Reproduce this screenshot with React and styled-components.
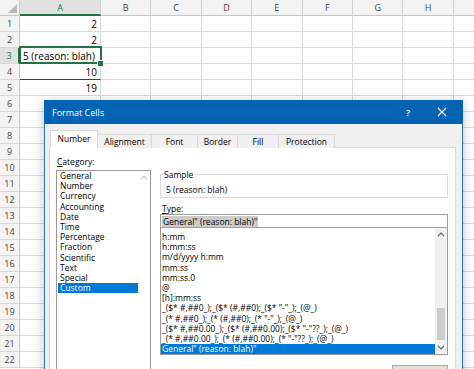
import React from "react";
import styled, { createGlobalStyle } from "styled-components";

const GlobalStyle = createGlobalStyle`
  html, body {
    margin: 0;
    padding: 0;
    background: #fff;
    overflow: hidden;
  }
  body {
    font-family: "Open Sans", "Noto Sans", sans-serif;
  }
`;

// the last column is only partly in view; its letter lies past the edge
const COLS = ["A", "B", "C", "D", "E", "F", "G", "H", ""];
const ROW_COUNT = 22;
const VALUES = { 1: "2", 2: "2", 3: "5 (reason: blah)", 4: "10", 5: "19" };

const CATEGORIES = [
  "General",
  "Number",
  "Currency",
  "Accounting",
  "Date",
  "Time",
  "Percentage",
  "Fraction",
  "Scientific",
  "Text",
  "Special",
  "Custom",
];

const FORMATS = [
  "h:mm",
  "h:mm:ss",
  "m/d/yyyy h:mm",
  "mm:ss",
  "mm:ss.0",
  "@",
  "[h]:mm:ss",
  '_($* #,##0_);_($* (#,##0);_($* "-"_);_(@_)',
  '_(* #,##0_);_(* (#,##0);_(* "-"_);_(@_)',
  '_($* #,##0.00_);_($* (#,##0.00);_($* "-"??_);_(@_)',
  '_(* #,##0.00_);_(* (#,##0.00);_(* "-"??_);_(@_)',
  'General" (reason: blah)"',
];

const TABS = [
  { label: "Number", width: 48 },
  { label: "Alignment", width: 55 },
  { label: "Font", width: 47 },
  { label: "Border", width: 41 },
  { label: "Fill", width: 42 },
  { label: "Protection", width: 57 },
];

export default function App() {
  return (
    <Page>
      <GlobalStyle />
      <Sheet>
        <Corner />
        {COLS.map((c, i) => (
          <ColHead key={i} $active={c === "A"}>
            {c}
          </ColHead>
        ))}
        {Array.from({ length: ROW_COUNT }, (_, i) => i + 1).map((r) => (
          <React.Fragment key={r}>
            <RowHead $active={r === 3}>{r}</RowHead>
            {COLS.map((c, i) => (
              <Cell
                key={i}
                $selected={c === "A" && r === 3}
                $under={c === "A" && r === 4}
                $left={r === 3}
              >
                {c === "A" ? VALUES[r] : null}
              </Cell>
            ))}
          </React.Fragment>
        ))}
      </Sheet>

      <Dialog>
        <TitleBar>
          <Title>Format Cells</Title>
          <TitleButtons>
            <TitleButton>?</TitleButton>
            <TitleButton>
              <svg width="10" height="10" viewBox="0 0 10 10">
                <path d="M1 1 L9 9 M9 1 L1 9" stroke="#fff" strokeWidth="1.1" />
              </svg>
            </TitleButton>
          </TitleButtons>
        </TitleBar>

        <Body>
          <TabRow>
            {TABS.map((t, i) => (
              <Tab key={t.label} $active={i === 0} $width={t.width}>
                {t.label}
              </Tab>
            ))}
          </TabRow>

          <Panel>
            <Column>
              <Label>
                <u>C</u>ategory:
              </Label>
              <CategoryList>
                <Items>
                  {CATEGORIES.map((c) => (
                    <Item key={c} $selected={c === "Custom"} $inset>
                      {c}
                    </Item>
                  ))}
                </Items>
                <Scrollbar $disabled>
                  <Arrow>
                    <Chevron up light />
                  </Arrow>
                  <Track />
                  <Arrow>
                    <Chevron light />
                  </Arrow>
                </Scrollbar>
              </CategoryList>
            </Column>

            <Column>
              <GroupBox>
                <Legend>Sample</Legend>
                5 (reason: blah)
              </GroupBox>
              <TypeLabel>
                <u>T</u>ype:
              </TypeLabel>
              <TypeInput>
                <Selection>General" (reason: blah)"</Selection>
              </TypeInput>
              <TypeList>
                <Items $top={4}>
                  {FORMATS.map((f, i) => (
                    <Item key={i} $selected={i === FORMATS.length - 1}>
                      {f}
                    </Item>
                  ))}
                </Items>
                <Scrollbar>
                  <Arrow>
                    <Chevron up />
                  </Arrow>
                  <Track>
                    <Thumb />
                  </Track>
                  <Arrow>
                    <Chevron />
                  </Arrow>
                </Scrollbar>
              </TypeList>
              <ButtonRow>
                <Button aria-label="Delete" />
              </ButtonRow>
            </Column>
          </Panel>
        </Body>
      </Dialog>
    </Page>
  );
}

function Chevron({ up, light }) {
  return (
    <svg width="8" height="5" viewBox="0 0 8 5">
      <polyline
        points={up ? "1,4.2 4,1.2 7,4.2" : "1,0.8 4,3.8 7,0.8"}
        fill="none"
        stroke={light ? "#c4c4c4" : "#606060"}
        strokeWidth="1.2"
      />
    </svg>
  );
}

const Page = styled.div`
  position: relative;
  width: 474px;
  height: 369px;
  overflow: hidden;
  background: #fff;
`;

/* ---------- spreadsheet ---------- */

const Sheet = styled.div`
  display: grid;
  grid-template-columns: 20px 81px repeat(8, 50.4px);
  grid-auto-rows: 16px;
  font-family: "Open Sans", sans-serif;
`;

const Corner = styled.div`
  position: relative;
  background: #f3f3f3;
  border-right: 1px solid #c6c6c6;
  border-bottom: 1px solid #c6c6c6;
  box-sizing: border-box;

  &::after {
    content: "";
    position: absolute;
    right: 2px;
    bottom: 2px;
    border-left: 9px solid transparent;
    border-bottom: 9px solid #b8b8b8;
  }
`;

const ColHead = styled.div`
  display: flex;
  align-items: center;
  justify-content: center;
  background: ${(p) => (p.$active ? "#e1e1e1" : "#f3f3f3")};
  border-right: 1px solid #d0d0d0;
  border-bottom: ${(p) => (p.$active ? "2px solid #217346" : "1px solid #c6c6c6")};
  box-sizing: border-box;
  font-size: 9px;
  color: ${(p) => (p.$active ? "#217346" : "#444")};
`;

const RowHead = styled.div`
  display: flex;
  align-items: center;
  justify-content: center;
  background: ${(p) => (p.$active ? "#e1e1e1" : "#f3f3f3")};
  border-right: ${(p) => (p.$active ? "2px solid #217346" : "1px solid #c6c6c6")};
  border-bottom: 1px solid #d8d8d8;
  box-sizing: border-box;
  font-size: 9px;
  color: ${(p) => (p.$active ? "#217346" : "#444")};
`;

const Cell = styled.div`
  position: relative;
  display: flex;
  align-items: center;
  justify-content: ${(p) => (p.$left ? "flex-start" : "flex-end")};
  padding: 0 3px;
  border-right: 1px solid #dadada;
  border-bottom: 1px solid ${(p) => (p.$under ? "#404040" : "#dadada")};
  box-sizing: border-box;
  font-size: 10px;
  color: #000;
  white-space: nowrap;

  ${(p) =>
    p.$selected &&
    `
    &::after {
      content: "";
      position: absolute;
      left: -1px;
      top: -2px;
      right: -2px;
      bottom: -1px;
      border: 2px solid #217346;
    }
    &::before {
      content: "";
      position: absolute;
      right: -4px;
      bottom: -4px;
      width: 5px;
      height: 5px;
      background: #217346;
      border: 1px solid #fff;
      z-index: 1;
    }
  `}
`;

/* ---------- dialog ---------- */

const Dialog = styled.div`
  position: absolute;
  left: 44px;
  top: 100px;
  width: 419px;
  height: 300px;
  box-sizing: border-box;
  background: #f0f0f0;
  border: 1px solid #2f73b8;
  border-top: none;
  box-shadow: 0 2px 10px rgba(0, 0, 0, 0.25);
  font-family: "Open Sans", "Noto Sans", sans-serif;
  font-size: 8.5px;
  color: #000;
`;

const TitleBar = styled.div`
  display: flex;
  align-items: center;
  justify-content: space-between;
  height: 24px;
  margin: 0 -1px;
  padding: 0 4px 0 8px;
  background: #0563b4;
  color: #fff;
`;

const Title = styled.div`
  font-size: 9px;
`;

const TitleButtons = styled.div`
  display: flex;
  height: 100%;
`;

const TitleButton = styled.div`
  display: flex;
  align-items: center;
  justify-content: center;
  width: 34px;
  height: 100%;
  font-size: 9px;
  font-weight: 600;
`;

const Body = styled.div`
  padding: 6px 6px 0 4px;
`;

const TabRow = styled.div`
  position: relative;
  z-index: 1;
  display: flex;
  align-items: flex-end;
  height: 18px;
  margin: 0 0 -1px 1px;
`;

const Tab = styled.div`
  display: flex;
  align-items: center;
  justify-content: center;
  width: ${(p) => p.$width}px;
  height: ${(p) => (p.$active ? 18 : 14)}px;
  margin-right: -1px;
  box-sizing: border-box;
  border: 1px solid #d9d9d9;
  border-bottom: none;
  background: ${(p) => (p.$active ? "#fff" : "#f0f0f0")};
  position: relative;
  z-index: ${(p) => (p.$active ? 2 : 1)};
  padding-bottom: ${(p) => (p.$active ? 2 : 0)}px;
`;

const Panel = styled.div`
  display: grid;
  grid-template-columns: 95px 288px;
  column-gap: 9px;
  align-items: start;
  height: 260px;
  padding: 8px 0 0 6px;
  background: #fff;
  border: 1px solid #d9d9d9;
`;

const Column = styled.div`
  display: flex;
  flex-direction: column;
`;

const Label = styled.div`
  height: 11px;
  line-height: 11px;
  margin: 0 0 3px 1px;
`;

const CategoryList = styled.div`
  display: flex;
  height: 210px;
  box-sizing: border-box;
  border: 1px solid #9a9a9a;
`;

const Items = styled.div`
  flex: 1;
  min-width: 0;
  overflow: hidden;
  padding-top: ${(p) => p.$top || 0}px;
`;

const Item = styled.div`
  height: 10.2px;
  line-height: 10.2px;
  margin-left: ${(p) => (p.$inset ? 1 : 0)}px;
  padding-left: ${(p) => (p.$inset ? 2 : 1)}px;
  white-space: nowrap;
  background: ${(p) => (p.$selected ? "#0078d7" : "transparent")};
  color: ${(p) => (p.$selected ? "#fff" : "#000")};
`;

const Scrollbar = styled.div`
  display: flex;
  flex-direction: column;
  width: 12px;
  background: ${(p) => (p.$disabled ? "#fff" : "#f0f0f0")};
`;

const Arrow = styled.div`
  display: flex;
  align-items: center;
  justify-content: center;
  height: 13px;
`;

const Track = styled.div`
  flex: 1;
  display: flex;
  flex-direction: column;
  justify-content: flex-end;
  padding: 0 2px 1px;
`;

const Thumb = styled.div`
  height: 32px;
  background: #cdcdcd;
`;

const GroupBox = styled.div`
  position: relative;
  height: 24px;
  margin-top: 18px;
  box-sizing: border-box;
  padding: 9px 0 0 5px;
  border: 1px solid #dcdcdc;
  line-height: 11px;
`;

const Legend = styled.span`
  position: absolute;
  top: -6px;
  left: 2px;
  padding: 0 1px;
  background: #fff;
  line-height: 11px;
`;

const TypeLabel = styled.div`
  height: 11px;
  line-height: 11px;
  margin: 5px 0 0 2px;
`;

const TypeInput = styled.div`
  display: flex;
  align-items: center;
  height: 14px;
  box-sizing: border-box;
  padding-left: 1px;
  border: 1px solid #a0a0a0;
`;

const Selection = styled.span`
  background: #cccccc;
  line-height: 11px;
  padding: 0 1px;
`;

const TypeList = styled.div`
  display: flex;
  height: 127px;
  box-sizing: border-box;
  border: 1px solid #9a9a9a;
  border-top: none;
`;

const ButtonRow = styled.div`
  display: flex;
  justify-content: flex-end;
  margin-top: 10px;
`;

const Button = styled.div`
  width: 56px;
  height: 21px;
  box-sizing: border-box;
  border: 1px solid #adadad;
  background: #e1e1e1;
`;
